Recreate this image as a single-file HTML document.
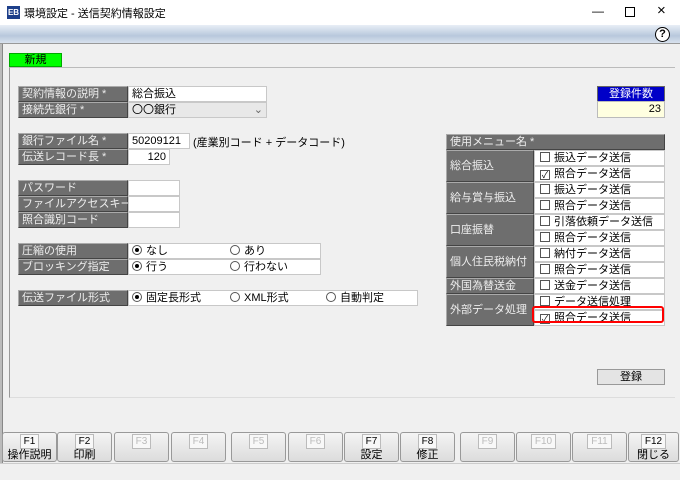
<!DOCTYPE html>
<html><head><meta charset="utf-8"><style>
*{box-sizing:border-box;margin:0;padding:0}
body{width:680px;height:480px;background:#f0f0f0;font-family:"Liberation Sans","Noto Sans CJK JP",sans-serif;font-size:11px;position:relative;overflow:hidden;color:#000}
.a{position:absolute}
.lb{position:absolute;background:#6e6e6e;color:#eee;border:1px solid #444;border-top-color:#aaa;border-left-color:#aaa;height:16px;line-height:14px;padding-left:3px;font-size:11px;white-space:nowrap}
.in{position:absolute;background:#fff;border:1px solid #c8c8c8;height:16px;line-height:14px;padding:0 3px;white-space:nowrap}
.fk{position:absolute;top:432px;height:30px;border:1px solid #999;border-radius:3px;background:linear-gradient(#f4f4f4,#dcdcdc);text-align:center;font-size:11px;line-height:13px}
.fk .k{display:inline-block;border:1px solid #bbb;background:#f8f8f8;padding:0 3px;margin-top:1px;font-size:10px}
.dis .k{color:#bbb}
.cb{display:inline-block;width:10px;height:10px;border:1px solid #555;background:#fff;margin:0 4px 0 5px;vertical-align:-1px;font-size:9px;line-height:9px;text-align:center}
.rd{display:inline-block;width:10px;height:10px;border:1px solid #555;border-radius:50%;background:#fff;margin-right:4px;vertical-align:-1px;position:relative}
.rd.on::after{content:"";position:absolute;left:2px;top:2px;width:4px;height:4px;border-radius:50%;background:#000}
</style></head><body>
<div class="a" style="left:0;top:0;width:680px;height:25px;background:#fff"></div>
<div class="a" style="left:7px;top:6px;width:13px;height:13px;background:#1d3f8a;color:#fff;font-size:8px;line-height:13px;text-align:center;font-weight:bold">EB</div>
<div class="a" style="left:24px;top:5px;font-size:11px">環境設定 - 送信契約情報設定</div>
<div class="a" style="left:592px;top:4px;font-size:12px">&#8212;</div>
<div class="a" style="left:625px;top:7px;width:10px;height:10px;border:1px solid #000"></div>
<div class="a" style="left:657px;top:2px;font-size:15px">&#215;</div>
<div class="a" style="left:0;top:25px;width:680px;height:19px;background:linear-gradient(#e8eef6,#b8c8dc 60%,#d8e2ee);border-bottom:1px solid #999"></div>
<div class="a" style="left:655px;top:27px;width:15px;height:15px;border:1.5px solid #000;border-radius:50%;font-size:11px;line-height:12px;text-align:center;font-weight:bold;background:#fff">?</div>
<div class="a" style="left:0;top:44px;width:3px;height:420px;background:#bbb;border-right:1px solid #888"></div>
<div class="a" style="left:9px;top:53px;width:53px;height:14px;background:#00ff00;border:1px solid #0a0;text-align:center;line-height:12px">新規</div>
<div class="a" style="left:9px;top:67px;width:666px;height:331px;border-left:1px solid #999;border-top:1px solid #bbb;border-bottom:1px solid #ddd"></div>

<div class="lb" style="left:18px;top:86px;width:110px">契約情報の説明 *</div><div class="in" style="left:128px;top:86px;width:139px">総合振込</div>
<div class="lb" style="left:18px;top:102px;width:110px">接続先銀行 *</div><div class="in" style="left:128px;top:102px;width:139px;background:#e8e8e8">〇〇銀行<span style="float:right;color:#666">&#8964;</span></div>

<div class="lb" style="left:18px;top:133px;width:110px">銀行ファイル名 *</div><div class="in" style="left:128px;top:133px;width:62px">50209121</div>
<div class="a" style="left:193px;top:134px">(産業別コード + データコード)</div>
<div class="lb" style="left:18px;top:149px;width:110px">伝送レコード長 *</div><div class="in" style="left:128px;top:149px;width:42px;text-align:right">120</div>

<div class="lb" style="left:18px;top:180px;width:110px">パスワード</div><div class="in" style="left:128px;top:180px;width:52px"></div>
<div class="lb" style="left:18px;top:196px;width:110px">ファイルアクセスキー</div><div class="in" style="left:128px;top:196px;width:52px"></div>
<div class="lb" style="left:18px;top:212px;width:110px">照合識別コード</div><div class="in" style="left:128px;top:212px;width:52px"></div>

<div class="lb" style="left:18px;top:243px;width:110px">圧縮の使用</div><div class="in" style="left:128px;top:243px;width:193px"><span class="rd on"></span>なし<span style="position:absolute;left:101px"><span class="rd"></span>あり</span></div>
<div class="lb" style="left:18px;top:259px;width:110px">ブロッキング指定</div><div class="in" style="left:128px;top:259px;width:193px"><span class="rd on"></span>行う<span style="position:absolute;left:101px"><span class="rd"></span>行わない</span></div>

<div class="lb" style="left:18px;top:290px;width:110px">伝送ファイル形式</div><div class="in" style="left:128px;top:290px;width:290px"><span class="rd on"></span>固定長形式<span style="position:absolute;left:101px"><span class="rd"></span>XML形式</span><span style="position:absolute;left:197px"><span class="rd"></span>自動判定</span></div>

<div class="a" style="left:597px;top:86px;width:68px;height:16px;background:#0000c8;color:#fff;text-align:center;line-height:15px;border:1px solid #666">登録件数</div>
<div class="a" style="left:597px;top:101px;width:68px;height:17px;background:#ffffe0;border:1px solid #bbb;text-align:right;padding-right:3px;line-height:15px">23</div>

<div class="lb" style="left:446px;top:134px;width:219px">使用メニュー名 *</div>
<div class="lb" style="left:446px;top:150px;width:88px;height:32px;line-height:30px">総合振込</div>
<div class="in" style="left:534px;top:150px;width:131px;padding:0"><span class="cb"></span>振込データ送信</div>
<div class="in" style="left:534px;top:166px;width:131px;padding:0"><span class="cb">✓</span>照合データ送信</div>
<div class="lb" style="left:446px;top:182px;width:88px;height:32px;line-height:30px">給与賞与振込</div>
<div class="in" style="left:534px;top:182px;width:131px;padding:0"><span class="cb"></span>振込データ送信</div>
<div class="in" style="left:534px;top:198px;width:131px;padding:0"><span class="cb"></span>照合データ送信</div>
<div class="lb" style="left:446px;top:214px;width:88px;height:32px;line-height:30px">口座振替</div>
<div class="in" style="left:534px;top:214px;width:131px;padding:0"><span class="cb"></span>引落依頼データ送信</div>
<div class="in" style="left:534px;top:230px;width:131px;padding:0"><span class="cb"></span>照合データ送信</div>
<div class="lb" style="left:446px;top:246px;width:88px;height:32px;line-height:30px">個人住民税納付</div>
<div class="in" style="left:534px;top:246px;width:131px;padding:0"><span class="cb"></span>納付データ送信</div>
<div class="in" style="left:534px;top:262px;width:131px;padding:0"><span class="cb"></span>照合データ送信</div>
<div class="lb" style="left:446px;top:278px;width:88px">外国為替送金</div>
<div class="in" style="left:534px;top:278px;width:131px;padding:0"><span class="cb"></span>送金データ送信</div>
<div class="lb" style="left:446px;top:294px;width:88px;height:32px;line-height:30px">外部データ処理</div>
<div class="in" style="left:534px;top:294px;width:131px;padding:0"><span class="cb"></span>データ送信処理</div>
<div class="in" style="left:534px;top:310px;width:131px;padding:0"><span class="cb">✓</span>照合データ送信</div>
<div class="a" style="left:532px;top:306px;width:132px;height:17px;border:2px solid #f00;border-radius:3px"></div>

<div class="a" style="left:597px;top:369px;width:68px;height:16px;border:1px solid #999;background:#e4e4e4;text-align:center;line-height:14px">登録</div>

<div class="fk" style="left:2px;width:55px"><span class="k">F1</span><br>操作説明</div>
<div class="fk" style="left:57px;width:55px"><span class="k">F2</span><br>印刷</div>
<div class="fk dis" style="left:114px;width:55px"><span class="k">F3</span></div>
<div class="fk dis" style="left:171px;width:55px"><span class="k">F4</span></div>
<div class="fk dis" style="left:231px;width:55px"><span class="k">F5</span></div>
<div class="fk dis" style="left:288px;width:55px"><span class="k">F6</span></div>
<div class="fk" style="left:344px;width:55px"><span class="k">F7</span><br>設定</div>
<div class="fk" style="left:400px;width:55px"><span class="k">F8</span><br>修正</div>
<div class="fk dis" style="left:460px;width:55px"><span class="k">F9</span></div>
<div class="fk dis" style="left:516px;width:55px"><span class="k">F10</span></div>
<div class="fk dis" style="left:572px;width:55px"><span class="k">F11</span></div>
<div class="fk" style="left:628px;width:51px"><span class="k">F12</span><br>閉じる</div>
<div class="a" style="left:0;top:463px;width:680px;height:17px;border-top:1px solid #ccc;background:#f0f0f0"></div>
</body></html>
